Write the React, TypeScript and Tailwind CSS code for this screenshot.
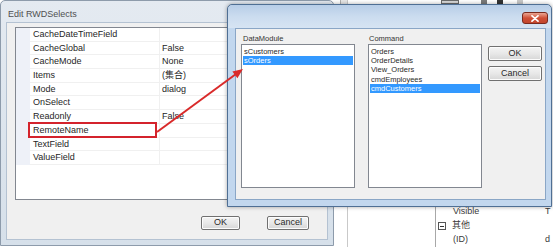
import React from "react";

const font = { fontFamily: '"Liberation Sans", "Noto Sans CJK TC", Arial, sans-serif' };

const props: [string, string][] = [
  ["CacheDateTimeField", ""],
  ["CacheGlobal", "False"],
  ["CacheMode", "None"],
  ["Items", "(集合)"],
  ["Mode", "dialog"],
  ["OnSelect", ""],
  ["Readonly", "False"],
  ["RemoteName", ""],
  ["TextField", ""],
  ["ValueField", ""],
];

const modules = ["sCustomers", "sOrders"];
const commands = ["Orders", "OrderDetails", "View_Orders", "cmdEmployees", "cmdCustomers"];

function WinButton({ label, className }: { label: string; className: string }) {
  return (
    <div
      className={`flex items-center justify-center rounded-[2px] border border-[#707070] bg-gradient-to-b from-[#f4f4f4] via-[#e8e8e8] to-[#d6d6d6] text-[9px] text-[#2a2a2a] shadow-[inset_0_0_0_1px_#fcfcfc] ${className}`}
    >
      {label}
    </div>
  );
}

function ListBox({ items, selected }: { items: string[]; selected: number }) {
  return (
    <div className="h-[144px] w-[114px] border border-[#828790] bg-white pt-[2px]">
      {items.map((it, i) => (
        <div
          key={it}
          className={`mx-px h-[9.2px] pl-px text-[7.5px] leading-[9.2px] ${
            i === selected ? "bg-[#3399ff] text-white" : "text-[#2a2a2a]"
          }`}
        >
          {it}
        </div>
      ))}
    </div>
  );
}

function EditDialog() {
  return (
    <div className="absolute left-0 top-0 flex h-[246px] w-[334px] flex-col rounded-t-[5px] border border-[#8d9bab] bg-gradient-to-b from-[#e4eaf1] to-[#d6e0ea]">
      <div className="flex h-[21px] shrink-0 items-center pl-[7px] pt-[6px] text-[9px] text-[#505050]">
        Edit RWDSelects
      </div>
      <div className="mx-[5px] mb-[5px] flex flex-1 flex-col border border-[#b4c2d2] bg-[#f0f0f0]">
        <div className="ml-[8px] mt-[4px] h-[173px] w-[305px] border border-[#828790] bg-white">
          {props.map(([name, value]) => (
            <div key={name} className="flex h-[13.7px] text-[9px] leading-[13.7px] text-[#262626]">
              <div className="w-[14px] shrink-0 bg-[#eef1f8]" />
              <div className="w-[130px] shrink-0 border-b border-r border-[#f0f0f0] pl-[3px]">{name}</div>
              <div className="flex-1 border-b border-[#f0f0f0] pl-[2px]">{value}</div>
            </div>
          ))}
        </div>
        <div className="mt-[16px] flex justify-end gap-[27px] pr-[18px]">
          <WinButton label="OK" className="h-[14px] w-[39px]" />
          <WinButton label="Cancel" className="h-[14px] w-[42px]" />
        </div>
      </div>
    </div>
  );
}

function SelectDialog() {
  return (
    <div className="absolute left-[227px] top-[4px] flex h-[203px] w-[325px] flex-col rounded-t-[5px] border border-[#4f6f94] bg-[#c2d7ee] shadow-[0_0_4px_rgba(0,0,0,0.35)]">
      <div className="relative h-[23px] shrink-0 rounded-t-[5px] bg-gradient-to-b from-[#b7cde7] via-[#cbdcef] to-[#d6e4f3]">
        <div className="absolute right-[3px] top-[7px] flex h-[12px] w-[26px] items-center justify-center rounded-[3px] border border-[#7a2a1e] bg-gradient-to-b from-[#e9a593] via-[#cf4f37] to-[#c2462c]">
          <svg width="8" height="7" viewBox="0 0 8 7">
            <path d="M1 0.8 L7 6.2 M7 0.8 L1 6.2" stroke="white" strokeWidth="1.7" strokeLinecap="round" />
          </svg>
        </div>
      </div>
      <div className="mb-[6px] ml-[7px] mr-[5px] flex flex-1 border border-[#8aa6c6] bg-[#f0f0f0] pl-[5px] pt-[5px] text-[#333]">
        <div className="flex flex-col">
          <div className="h-[10px] pl-[2px] text-[7.5px] leading-[10px]">DataModule</div>
          <ListBox items={modules} selected={1} />
        </div>
        <div className="ml-[13px] flex flex-col">
          <div className="h-[10px] pl-px text-[7.5px] leading-[10px]">Command</div>
          <ListBox items={commands} selected={4} />
        </div>
        <div className="ml-[6px] mt-[12px] flex flex-col gap-[5px]">
          <WinButton label="OK" className="h-[15px] w-[54px]" />
          <WinButton label="Cancel" className="h-[15px] w-[54px]" />
        </div>
      </div>
    </div>
  );
}

function Background() {
  return (
    <>
      <div className="absolute left-[333px] right-0 top-0 flex h-[6px] items-start bg-white">
        <div className="ml-[7px] h-[6px] w-[8px] border-x border-[#b0b0b0] bg-[#e6e6e6]" />
        <div className="ml-[93px] h-[4px] w-[18px] border border-[#6a6a6a] bg-[#d8d8d8]" />
        <div className="ml-[22px] h-[4px] w-[6px] bg-[#7a7a7a]" />
        <div className="ml-[10px] h-[4px] w-[6px] bg-[#333]" />
        <div className="ml-[14px] h-[4px] w-[6px] bg-[#c8c8c8]" />
      </div>
      <div className="absolute bottom-0 left-[347px] top-0 w-px bg-[#c9c9c9]" />
      <div
        className="absolute bottom-0 left-[435px] right-0 top-[198px] border-l border-[#a8a8a8] bg-white pt-[7px] text-[9px] text-[#3a3a3a]"
        style={font}
      >
        <div className="flex h-[14px] items-center">
          <div className="w-[109px] shrink-0 pl-[17px]">Visible</div>
          <div>T</div>
        </div>
        <div className="flex h-[14px] items-center">
          <div className="ml-[2px] flex h-[8px] w-[8px] items-center justify-center border border-[#555]">
            <div className="h-px w-[4px] bg-[#333]" />
          </div>
          <div className="pl-[6px]">其他</div>
        </div>
        <div className="flex h-[14px] items-center">
          <div className="w-[109px] shrink-0 pl-[17px]">(ID)</div>
          <div>d</div>
        </div>
      </div>
    </>
  );
}

export default function App() {
  return (
    <div className="relative h-[247px] w-[553px] overflow-hidden bg-white" style={font}>
      <Background />
      <EditDialog />
      <SelectDialog />
      <div className="absolute left-[28px] top-[122px] h-[16px] w-[129px] border-2 border-[#d4232c]" />
      <svg className="pointer-events-none absolute left-0 top-0" width="553" height="247">
        <line x1="157" y1="132" x2="236" y2="74" stroke="#d92a2a" strokeWidth="2" />
        <polygon points="243,69 237.4,78.3 232.4,71.4" fill="#d92a2a" />
      </svg>
    </div>
  );
}
